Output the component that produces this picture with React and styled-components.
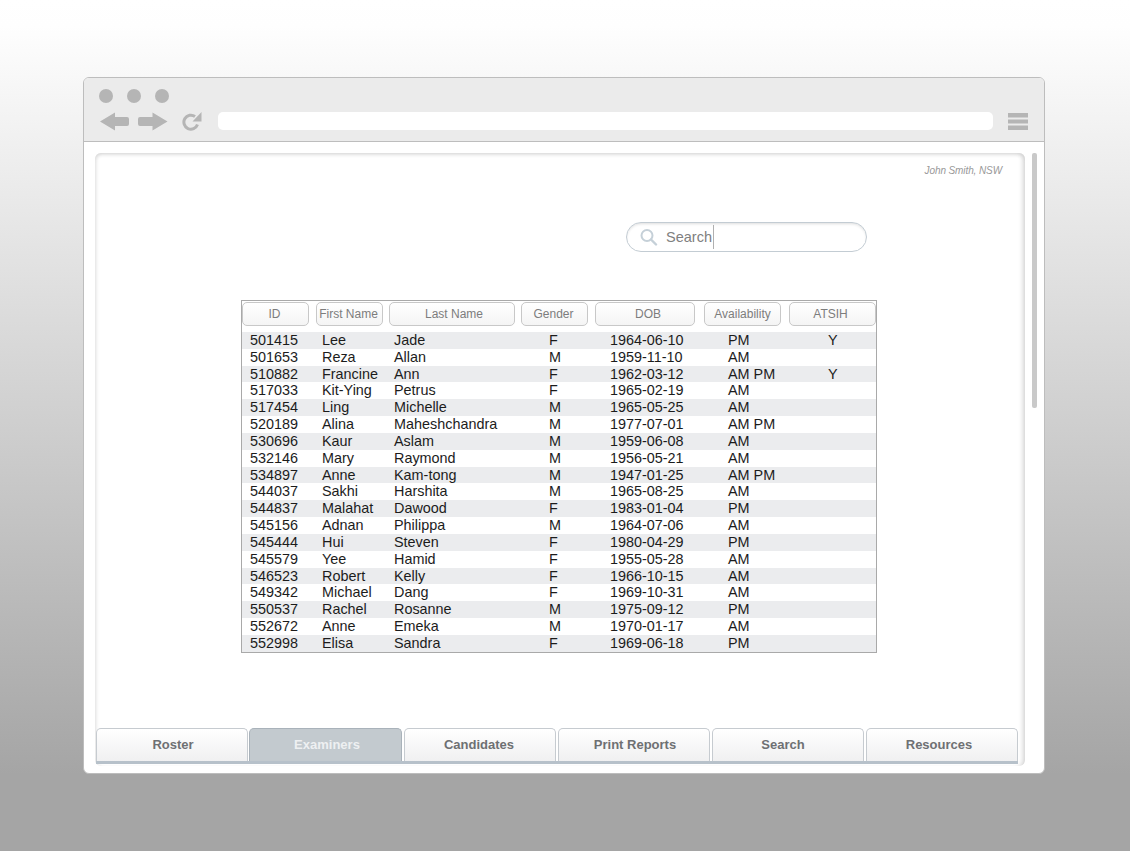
import React from 'react';
import styled, { createGlobalStyle } from 'styled-components';

const GlobalStyle = createGlobalStyle`
  html, body {
    margin: 0;
    padding: 0;
  }
  body {
    font-family: "Liberation Sans", Arial, sans-serif;
  }
`;

const Page = styled.div`
  box-sizing: border-box;
  width: 1130px;
  height: 851px;
  overflow: hidden;
  padding: 77px 85px 0 83px;
  background: linear-gradient(to bottom, #ffffff 0%, #fefefe 3%, #a5a5a5 91%, #a5a5a5 100%);
`;

const BrowserWindow = styled.div`
  box-sizing: border-box;
  width: 962px;
  height: 697px;
  background: #ffffff;
  border: 1px solid #bdbdbd;
  border-radius: 6px;
  overflow: hidden;
  display: flex;
  flex-direction: column;
`;

const Chrome = styled.div`
  box-sizing: border-box;
  flex: none;
  height: 64px;
  background: #ebebeb;
  border-bottom: 1px solid #bdbdbd;
  padding: 11px 16px 0 15px;
`;

const Dots = styled.div`
  display: flex;
  gap: 14px;
`;

const Dot = styled.span`
  width: 14px;
  height: 14px;
  border-radius: 50%;
  background: #b5b5b5;
`;

const NavRow = styled.div`
  display: flex;
  align-items: center;
  margin-top: 9px;
  height: 18px;
`;

const NavIcon = styled.svg`
  flex: none;
  display: block;
  margin-right: ${({ $mr }) => $mr}px;
`;

const AddressBar = styled.div`
  flex: none;
  width: 775px;
  height: 18px;
  background: #ffffff;
  border-radius: 5px;
  margin-right: 15px;
`;

const Body = styled.div`
  flex: 1;
  display: flex;
  padding: 11px 7px 7px 11px;
  min-height: 0;
`;

const Panel = styled.div`
  box-sizing: border-box;
  width: 930px;
  background: #ffffff;
  border-radius: 6px;
  box-shadow: inset 0 3px 4px -2px #cfcfcf, inset -5px 0 5px -3px #d4d4d4, inset 4px 0 4px -3px #e2e2e2;
  padding: 12px 7px 2px 1px;
  display: flex;
  flex-direction: column;
`;

const UserName = styled.div`
  align-self: flex-end;
  margin-right: 16px;
  font-size: 10px;
  letter-spacing: -0.1px;
  line-height: 12px;
  font-style: italic;
  color: #989898;
`;

const SearchBox = styled.div`
  box-sizing: border-box;
  align-self: flex-start;
  margin: 45px 0 0 530px;
  width: 241px;
  height: 30px;
  border: 1px solid #c3ccd3;
  border-radius: 15px;
  box-shadow: inset 0 2px 3px -1px #dddddd;
  display: flex;
  align-items: center;
  padding-left: 13px;
  font-size: 14.5px;
  color: #808080;
`;

const SearchText = styled.span`
  margin-left: 8px;
  padding-right: 1px;
  line-height: 24px;
  border-right: 1px solid #b0b0b0;
`;

const Table = styled.div`
  box-sizing: border-box;
  align-self: flex-start;
  margin: 48px 0 0 145px;
  width: 636px;
  height: 353px;
  border: 1px solid #a9a9a9;
`;

const HeaderRow = styled.div`
  display: flex;
  height: 24px;
  margin: 1px 0 6px;
`;

const HeaderCell = styled.div`
  box-sizing: border-box;
  flex: none;
  width: ${({ $w }) => $w}px;
  margin-left: ${({ $ml }) => $ml}px;
  padding: 0 ${({ $dx }) => ($dx < 0 ? -2 * $dx : 0)}px 0 ${({ $dx }) => ($dx > 0 ? 2 * $dx : 0)}px;
  border: 1px solid #c8c8c8;
  border-radius: 5px;
  background: linear-gradient(to bottom, #ffffff, #f4f4f4);
  display: flex;
  align-items: center;
  justify-content: center;
  font-size: 12px;
  color: #7d7d7d;
  white-space: nowrap;
`;

const Row = styled.div`
  display: grid;
  grid-template-columns: 72px 72px 155px 61px 118px 100px 40px;
  height: 16.83px;
  line-height: 16.83px;
  padding-left: 8px;
  font-size: 14.4px;
  color: #1c1c1c;
  background: ${({ $striped }) => ($striped ? '#ebecee' : '#ffffff')};
  white-space: nowrap;
`;

const TabBar = styled.div`
  margin-top: auto;
  width: 922px;
  border-bottom: 3px solid #b7c1ca;
  display: flex;
  gap: 2px;
`;

const Tab = styled.div`
  box-sizing: border-box;
  flex: none;
  width: ${({ $w }) => $w}px;
  margin-right: ${({ $mr }) => $mr || 0}px;
  height: 33px;
  padding: 0 ${({ $dx }) => ($dx < 0 ? -2 * $dx : 0)}px 2px ${({ $dx }) => ($dx > 0 ? 2 * $dx : 0)}px;
  border: 1px solid ${({ $active }) => ($active ? '#a9b2ba' : '#c6cbd0')};
  border-bottom: none;
  border-radius: 5px 5px 0 0;
  background: ${({ $active }) => ($active ? '#c3cacf' : 'linear-gradient(to bottom, #ffffff, #f0f0f1)')};
  color: ${({ $active }) => ($active ? '#eef0f2' : '#6e7073')};
  font-size: 13px;
  font-weight: bold;
  display: flex;
  align-items: center;
  justify-content: center;
`;

const Scrollbar = styled.div`
  flex: none;
  width: 5px;
  height: 255px;
  margin-left: 7px;
  background: #c9c9c9;
  border-radius: 2px;
`;

const columns = [
  { label: 'ID', w: 67, ml: 0, dx: -1 },
  { label: 'First Name', w: 67, ml: 7, dx: -1 },
  { label: 'Last Name', w: 126, ml: 6, dx: 2 },
  { label: 'Gender', w: 67, ml: 6, dx: -1 },
  { label: 'DOB', w: 100, ml: 7, dx: 3 },
  { label: 'Availability', w: 77, ml: 9, dx: 0 },
  { label: 'ATSIH', w: 87, ml: 8, dx: -2 },
];

const examiners = [
  ['501415', 'Lee', 'Jade', 'F', '1964-06-10', 'PM', 'Y'],
  ['501653', 'Reza', 'Allan', 'M', '1959-11-10', 'AM', ''],
  ['510882', 'Francine', 'Ann', 'F', '1962-03-12', 'AM PM', 'Y'],
  ['517033', 'Kit-Ying', 'Petrus', 'F', '1965-02-19', 'AM', ''],
  ['517454', 'Ling', 'Michelle', 'M', '1965-05-25', 'AM', ''],
  ['520189', 'Alina', 'Maheshchandra', 'M', '1977-07-01', 'AM PM', ''],
  ['530696', 'Kaur', 'Aslam', 'M', '1959-06-08', 'AM', ''],
  ['532146', 'Mary', 'Raymond', 'M', '1956-05-21', 'AM', ''],
  ['534897', 'Anne', 'Kam-tong', 'M', '1947-01-25', 'AM PM', ''],
  ['544037', 'Sakhi', 'Harshita', 'M', '1965-08-25', 'AM', ''],
  ['544837', 'Malahat', 'Dawood', 'F', '1983-01-04', 'PM', ''],
  ['545156', 'Adnan', 'Philippa', 'M', '1964-07-06', 'AM', ''],
  ['545444', 'Hui', 'Steven', 'F', '1980-04-29', 'PM', ''],
  ['545579', 'Yee', 'Hamid', 'F', '1955-05-28', 'AM', ''],
  ['546523', 'Robert', 'Kelly', 'F', '1966-10-15', 'AM', ''],
  ['549342', 'Michael', 'Dang', 'F', '1969-10-31', 'AM', ''],
  ['550537', 'Rachel', 'Rosanne', 'M', '1975-09-12', 'PM', ''],
  ['552672', 'Anne', 'Emeka', 'M', '1970-01-17', 'AM', ''],
  ['552998', 'Elisa', 'Sandra', 'F', '1969-06-18', 'PM', ''],
];

const tabs = [
  { label: 'Roster', w: 152, mr: -1, dx: 1 },
  { label: 'Examiners', w: 153, active: true, dx: 1.5 },
  { label: 'Candidates', w: 152, dx: -1 },
  { label: 'Print Reports', w: 152, dx: 1 },
  { label: 'Search', w: 152, dx: -5 },
  { label: 'Resources', w: 152, dx: -3 },
];

const App = () => (
  <>
    <GlobalStyle />
    <Page>
      <BrowserWindow>
        <Chrome>
          <Dots>
            <Dot />
            <Dot />
            <Dot />
          </Dots>
          <NavRow>
            <NavIcon width="30" height="19" viewBox="0 0 30 19" $mr={9}>
              <path d="M1 9.5 L16 0.5 V5 H28 Q30 5 30 7 V12 Q30 14 28 14 H16 V18.5 Z" fill="#b5b5b5" />
            </NavIcon>
            <NavIcon width="30" height="19" viewBox="0 0 30 19" $mr={14}>
              <path d="M29.5 9.5 L14.5 0.5 V5 H2 Q0 5 0 7 V12 Q0 14 2 14 H14.5 V18.5 Z" fill="#b5b5b5" />
            </NavIcon>
            <NavIcon width="21" height="21" viewBox="0 0 21 21" $mr={15}>
              <path d="M15.5 13.5 A7 7 0 1 1 13 5.5" fill="none" stroke="#b5b5b5" strokeWidth="3" />
              <path d="M19.5 1 V10.5 H10.5 Z" fill="#b5b5b5" />
            </NavIcon>
            <AddressBar />
            <NavIcon width="20" height="17" viewBox="0 0 20 17" $mr={0}>
              <path d="M0 0 H20 V4.5 H0 Z M0 6.5 H20 V10.5 H0 Z M0 12.5 H20 V17 H0 Z" fill="#b5b5b5" />
            </NavIcon>
          </NavRow>
        </Chrome>
        <Body>
          <Panel>
            <UserName>John Smith, NSW</UserName>
            <SearchBox>
              <svg width="18" height="18" viewBox="0 0 18 18">
                <circle cx="7" cy="7.5" r="5.5" fill="none" stroke="#c5d0d8" strokeWidth="2" />
                <path d="M11 11.5 L16 16.5" stroke="#c5d0d8" strokeWidth="2.4" strokeLinecap="round" />
              </svg>
              <SearchText>Search</SearchText>
            </SearchBox>
            <Table>
              <HeaderRow>
                {columns.map((col) => (
                  <HeaderCell key={col.label} $w={col.w} $ml={col.ml} $dx={col.dx}>
                    {col.label}
                  </HeaderCell>
                ))}
              </HeaderRow>
              {examiners.map((row, i) => (
                <Row key={row[0]} $striped={i % 2 === 0}>
                  {row.map((value, j) => (
                    <span key={j}>{value}</span>
                  ))}
                </Row>
              ))}
            </Table>
            <TabBar>
              {tabs.map((tab) => (
                <Tab key={tab.label} $w={tab.w} $mr={tab.mr} $active={tab.active} $dx={tab.dx}>
                  {tab.label}
                </Tab>
              ))}
            </TabBar>
          </Panel>
          <Scrollbar />
        </Body>
      </BrowserWindow>
    </Page>
  </>
);

export default App;
